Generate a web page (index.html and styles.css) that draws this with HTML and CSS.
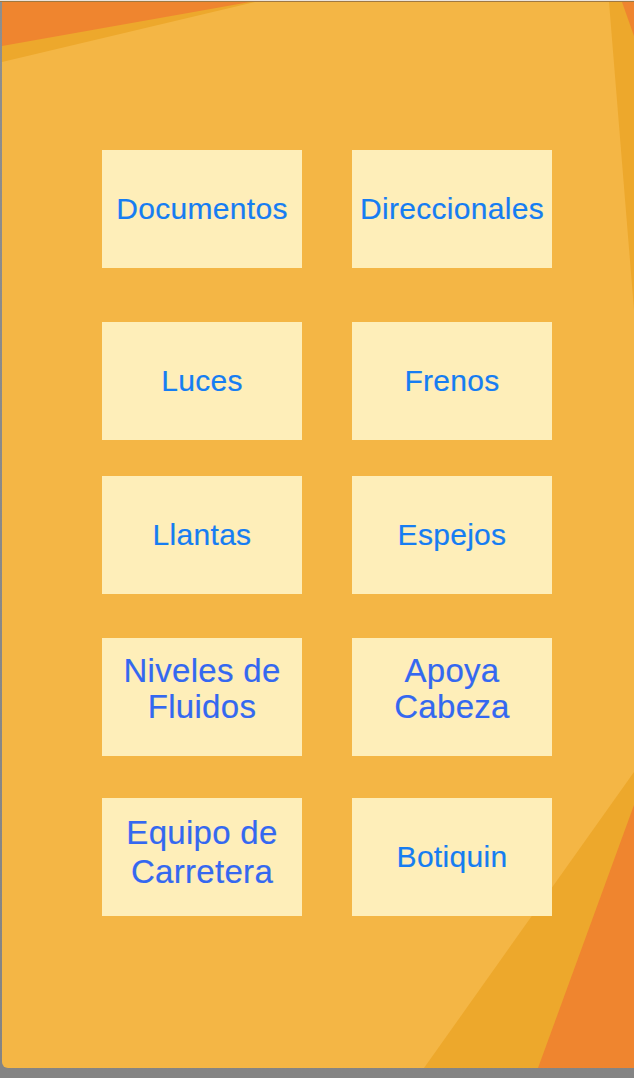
FILE: index.html
```html
<!DOCTYPE html>
<html lang="es">
<head>
<meta charset="utf-8">
<title>Revisión</title>
<link rel="stylesheet" href="styles.css">
</head>
<body>
<div class="window">
  <svg class="bg" width="632" height="1066" viewBox="0 0 632 1066" aria-hidden="true">
    <polygon points="0,0 253,0 0,60" fill="#EDA82C"/>
    <polygon points="0,0 248,0 0,44" fill="#EF852F"/>
    <polygon points="607,0 632,0 632,308" fill="#EDA82C"/>
    <polygon points="620,0 632,0 632,34" fill="#EF852F"/>
    <polygon points="422,1066 632,1066 632,770" fill="#EDA82C"/>
    <polygon points="536,1066 632,1066 632,803" fill="#EF852F"/>
  </svg>
  <div class="menu">
    <div class="row r1">
      <button class="tile">Documentos</button>
      <button class="tile">Direccionales</button>
    </div>
    <div class="row r2">
      <button class="tile">Luces</button>
      <button class="tile">Frenos</button>
    </div>
    <div class="row r3">
      <button class="tile">Llantas</button>
      <button class="tile">Espejos</button>
    </div>
    <div class="row r4">
      <button class="tile multi">Niveles de<br>Fluidos</button>
      <button class="tile multi">Apoya<br>Cabeza</button>
    </div>
    <div class="row r5">
      <button class="tile multi tall">Equipo de<br>Carretera</button>
      <button class="tile">Botiquin</button>
    </div>
  </div>
</div>
</body>
</html>
```

FILE: styles.css
```css
html, body {
  margin: 0;
  padding: 0;
}
body {
  width: 634px;
  height: 1078px;
  overflow: hidden;
  background: linear-gradient(to bottom, #ece4dc 0, #ece4dc 1px, #a07840 1px, #a07840 2px, #8e8e8e 2px, #848484 100%);
  padding-top: 2px;
  padding-left: 2px;
  box-sizing: border-box;
  font-family: "Liberation Sans", Arial, sans-serif;
}
.window {
  position: relative;
  width: 632px;
  height: 1066px;
  background: #F4B645;
  border-bottom-left-radius: 6px;
  overflow: hidden;
}
.bg {
  position: absolute;
  left: 0;
  top: 0;
  display: block;
}
.menu {
  position: relative;
  padding-top: 148px;
  padding-left: 100px;
  display: flex;
  flex-direction: column;
}
.row {
  display: flex;
  gap: 50px;
}
.r2 { margin-top: 54px; }
.r3 { margin-top: 36px; }
.r4 { margin-top: 44px; }
.r5 { margin-top: 42px; }
.tile {
  width: 200px;
  height: 118px;
  border: 0;
  margin: 0;
  padding: 0;
  background: #FEEEB9;
  color: #167DF2;
  font-family: "Liberation Sans", Arial, sans-serif;
  font-size: 30px;
  letter-spacing: 0.3px;
  line-height: 34px;
  text-align: center;
  display: flex;
  align-items: center;
  justify-content: center;
  -webkit-text-stroke: 0.2px currentColor;
}
.tile.multi {
  color: #3468F0;
  font-size: 33px;
  letter-spacing: 0.3px;
  line-height: 36px;
  padding-bottom: 16px;
  box-sizing: border-box;
}
.tile.multi.tall {
  line-height: 39px;
  padding-bottom: 10px;
}
```
